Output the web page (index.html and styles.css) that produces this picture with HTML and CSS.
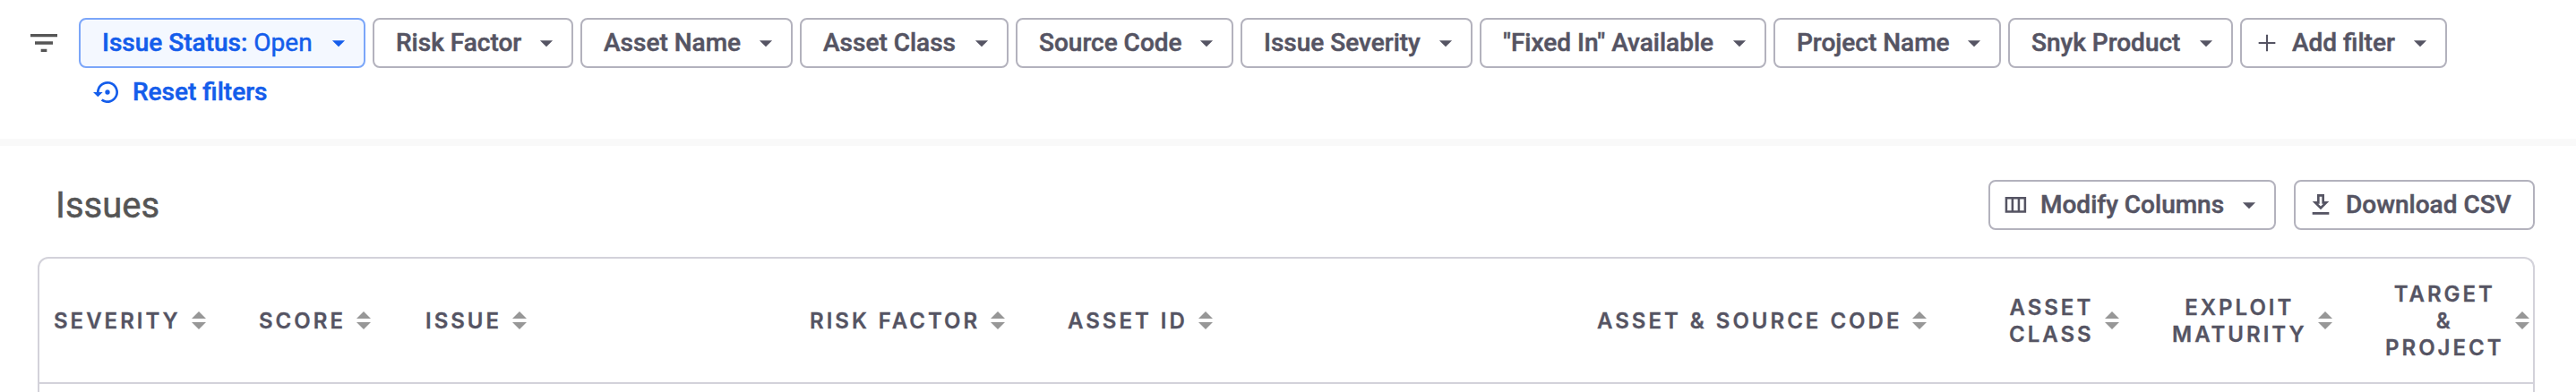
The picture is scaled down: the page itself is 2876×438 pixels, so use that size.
FILE: index.html
```html
<!DOCTYPE html>
<html lang="en">
<head>
<meta charset="utf-8">
<title>Issues</title>
<link rel="stylesheet" href="styles.css">
</head>
<body>
<svg class="sprite" aria-hidden="true">
  <symbol id="caret" viewBox="0 0 24 24"><path d="M7 10l5 5 5-5z"/></symbol>
  <symbol id="sort" viewBox="0 0 16 20"><path d="M0 8L8 0l8 8zM0 12h16l-8 8z"/></symbol>
</svg>
<section class="filters">
  <svg class="filter-icon" viewBox="0 0 24 24"><path d="M10 18h4v-2h-4v2zM3 6v2h18V6H3zm3 7h12v-2H6v2z"/></svg>
  <div class="chips">
    <button class="btn active w-status"><span>Issue Status: <span class="value">Open</span></span><svg class="caret"><use href="#caret"/></svg></button>
    <button class="btn w-risk"><span>Risk Factor</span><svg class="caret"><use href="#caret"/></svg></button>
    <button class="btn w-name"><span>Asset Name</span><svg class="caret"><use href="#caret"/></svg></button>
    <button class="btn w-class"><span>Asset Class</span><svg class="caret"><use href="#caret"/></svg></button>
    <button class="btn w-source"><span>Source Code</span><svg class="caret"><use href="#caret"/></svg></button>
    <button class="btn w-severity"><span>Issue Severity</span><svg class="caret"><use href="#caret"/></svg></button>
    <button class="btn w-fixed"><span>"Fixed In" Available</span><svg class="caret"><use href="#caret"/></svg></button>
    <button class="btn w-project"><span>Project Name</span><svg class="caret"><use href="#caret"/></svg></button>
    <button class="btn w-product"><span>Snyk Product</span><svg class="caret"><use href="#caret"/></svg></button>
    <button class="btn with-icon w-add"><svg class="lead" viewBox="0 0 24 24"><path d="M19 12.8h-6.2V19h-1.6v-6.2H5v-1.6h6.2V5h1.6v6.2H19z"/></svg><span>Add filter</span><svg class="caret"><use href="#caret"/></svg></button>
    <button class="reset"><svg class="reset-icon" viewBox="0 0 24 24"><path d="M14 12a2 2 0 1 0-4 0 2 2 0 0 0 4 0zM12 3a9 9 0 0 0-9 9H0l4 4 4-4H5a7 7 0 1 1 2.94 5.7l-1.42 1.44A9 9 0 1 0 12 3z"/></svg><span>Reset filters</span></button>
  </div>
</section>
<main class="issues">
  <header class="title-row">
    <h1>Issues</h1>
    <div class="actions">
      <button class="btn with-icon w-modify"><svg class="lead" viewBox="0 0 24 24"><path d="M3.5 5.3v13.2h17.6V5.3zm1.9 1.9h3.3v9.4H5.4zm5.2 0H14v9.4h-3.4zm5.3 0h3.3v9.4h-3.3z"/></svg><span>Modify Columns</span><svg class="caret"><use href="#caret"/></svg></button>
      <button class="btn with-icon w-download"><svg class="lead" viewBox="0 0 24 24"><path d="M13 5v6h1.17L12 13.17 9.83 11H11V5h2m2-2H9v6H5l7 7 7-7h-4V3zm4 15H5v2h14v-2z"/></svg><span>Download CSV</span></button>
    </div>
  </header>
  <div class="table">
    <div class="thead">
      <div class="th"><span>SEVERITY</span><svg class="sort"><use href="#sort"/></svg></div>
      <div class="th"><span>SCORE</span><svg class="sort"><use href="#sort"/></svg></div>
      <div class="th"><span>ISSUE</span><svg class="sort"><use href="#sort"/></svg></div>
      <div class="th"><span>RISK FACTOR</span><svg class="sort"><use href="#sort"/></svg></div>
      <div class="th"><span>ASSET ID</span><svg class="sort"><use href="#sort"/></svg></div>
      <div class="th"><span>ASSET &amp; SOURCE CODE</span><svg class="sort"><use href="#sort"/></svg></div>
      <div class="th"><span>ASSET<br>CLASS</span><svg class="sort"><use href="#sort"/></svg></div>
      <div class="th"><span>EXPLOIT<br>MATURITY</span><svg class="sort"><use href="#sort"/></svg></div>
      <div class="th"><span>TARGET<br>&amp;<br>PROJECT</span><svg class="sort"><use href="#sort"/></svg></div>
    </div>
  </div>
</main>
</body>
</html>
```
FILE: styles.css
```css
* { box-sizing: border-box; }
body {
  margin: 0;
  height: 438px;
  overflow: hidden;
  background: #fff;
  color: #555463;
  font-family: Roboto, sans-serif;
}
svg { display: block; flex: none; fill: currentColor; }
.sprite { width: 0; height: 0; position: absolute; }

.filters {
  display: flex;
  align-items: flex-start;
  gap: 19px;
  height: 163px;
  padding: 20px 29px 0;
  border-bottom: 8px solid #f9f9f9;
}
.filter-icon { width: 40px; height: 40px; margin-top: 8px; color: #555; }
.chips { display: flex; flex-wrap: wrap; gap: 0 8px; flex: 1; }

.btn {
  display: flex;
  align-items: center;
  justify-content: space-between;
  flex: none;
  height: 56px;
  padding: 0 11px 0 24px;
  border: 2px solid #b3b2bd;
  border-radius: 8px;
  background: #fff;
  color: #555463;
  font: 500 28px/36px Roboto, sans-serif;
  -webkit-text-stroke: 0.5px currentColor;
  white-space: nowrap;
}
.active { background: #f4f8ff; border-color: #7ba6f9; color: #145deb; }
.value { font-weight: 400; }
.caret { width: 34px; height: 34px; }
.lead { width: 32px; height: 32px; margin-right: 12px; }
.with-icon { justify-content: flex-start; padding-left: 12px; }
.with-icon .caret { margin-left: auto; }

.w-status { width: 320px; }
.w-risk { width: 224px; }
.w-name { width: 237px; }
.w-class { width: 233px; }
.w-source { width: 243px; }
.w-severity { width: 259px; }
.w-fixed { width: 320px; }
.w-project { width: 254px; }
.w-product { width: 251px; }
.w-add { width: 231px; }
.w-modify { width: 321px; }
.w-download { width: 269px; }

.reset {
  display: flex;
  align-items: center;
  gap: 12px;
  height: 54px;
  padding: 0 0 0 16px;
  border: 0;
  background: none;
  color: #145deb;
  font: 500 28px/36px Roboto, sans-serif;
  -webkit-text-stroke: 0.5px currentColor;
}
.reset-icon { width: 32px; height: 32px; }

.issues { padding: 38px 46px 0 42px; }
.title-row { display: flex; justify-content: space-between; height: 86px; padding-left: 20px; }
h1 {
  margin: 0;
  font-size: 40px;
  font-weight: 400;
  line-height: 58px;
  color: #555;
  -webkit-text-stroke: 0.5px currentColor;
}
.actions { display: flex; gap: 20px; }

.table {
  height: 170px;
  border: 2px solid #d3d2da;
  border-bottom: 0;
  border-radius: 12px 12px 0 0;
}
.thead {
  display: grid;
  grid-template-columns: 229px 186px 429px 288px 591px 460px 182px 238px 1fr;
  align-items: center;
  height: 140px;
  border-bottom: 2px solid #d3d2da;
}
.th {
  display: flex;
  align-items: center;
  gap: 12px;
  padding-left: 16px;
  font: 600 24px/30px Inter, sans-serif;
  letter-spacing: 3px;
  word-spacing: 1px;
  -webkit-text-stroke: 0.3px currentColor;
  text-align: center;
  white-space: nowrap;
}
.th span { padding-top: 1px; }
.sort { width: 16px; height: 20px; color: #979797; }
```
